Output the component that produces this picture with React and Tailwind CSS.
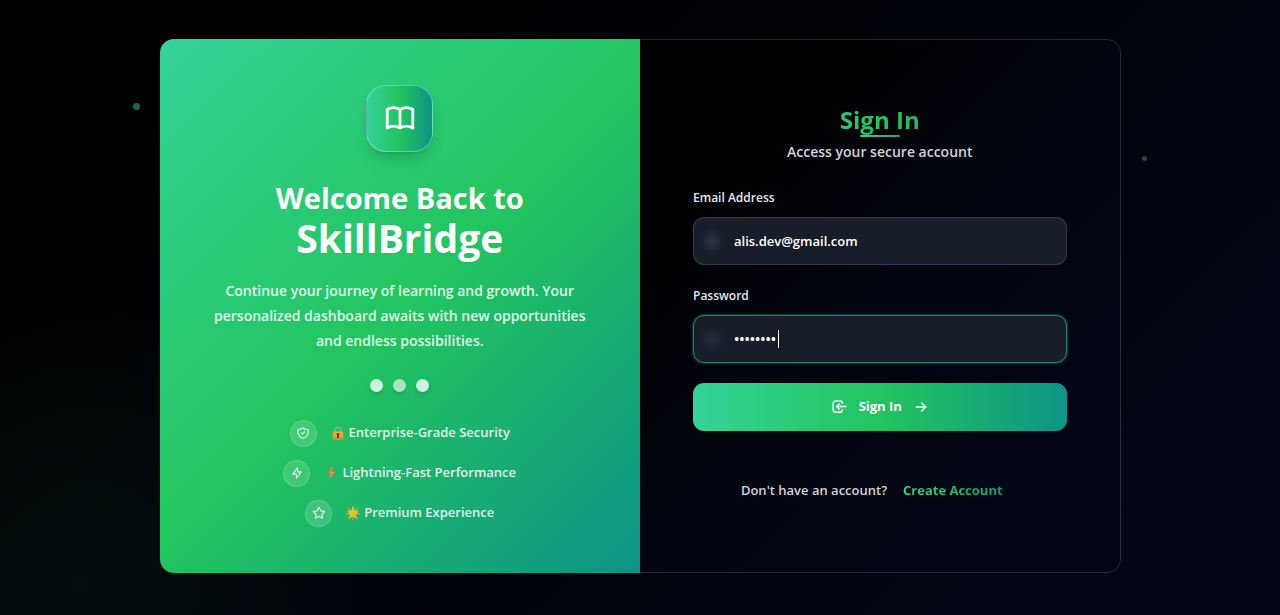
import { TbArrowRight, TbBolt, TbBook, TbStar } from "react-icons/tb";

function LineIcon({ className, strokeWidth = 2, children }) {
  return (
    <svg
      viewBox="0 0 24 24"
      className={className}
      fill="none"
      stroke="currentColor"
      strokeWidth={strokeWidth}
      strokeLinecap="round"
      strokeLinejoin="round"
      aria-hidden="true"
    >
      {children}
    </svg>
  );
}

function ShieldIcon({ className }) {
  return (
    <LineIcon className={className}>
      <path d="M9 12l2 2l4 -4" />
      <path d="M12 3a12 12 0 0 0 8.5 3a12 12 0 0 1 -8.5 15a12 12 0 0 1 -8.5 -15a12 12 0 0 0 8.5 -3" />
    </LineIcon>
  );
}

function LoginIcon({ className }) {
  return (
    <LineIcon className={className}>
      <path d="M16 7.5V7a3 3 0 0 0-3-3H7a4 4 0 0 0-4 4v8a4 4 0 0 0 4 4h6a3 3 0 0 0 3-3v-.5" />
      <path d="M21 12H8l3.5-3.5" />
      <path d="M11.500 15.500L8 12" />
    </LineIcon>
  );
}

function LockGlyph() {
  return (
    <svg viewBox="0 0 16 16" className="h-[14px] w-[14px]" aria-hidden="true">
      <path d="M4.900 7.500V4.400a3.100 3.100 0 0 1 6.200 0v3.100" fill="none" stroke="#9ca8a4" strokeWidth="1.5" />
      <rect x="2" y="6.2" width="12" height="9.3" rx="1.2" fill="#eba936" />
      <path d="M2 12.4h12v1.900a1.200 1.200 0 0 1-1.200 1.200H3.200A1.200 1.200 0 0 1 2 14.300z" fill="#e08a40" />
      <circle cx="8" cy="9.6" r="1.5" fill="#5b3b52" />
      <path d="M7.200 10h1.600l.3 3.600H6.900z" fill="#5b3b52" />
    </svg>
  );
}

function BoltGlyph() {
  return (
    <svg viewBox="0 0 16 16" className="h-[14px] w-[14px]" aria-hidden="true">
      <path d="M8.600.8 3.800 8.400h3l-1.400 6.800 6.600-8.400H8.800l1-6z" fill="#e8703a" />
      <path d="M8.600.8 6.400 8.400h1.800l-2.800 6.800 6.600-8.400H8.800l1-6z" fill="#e8904a" />
    </svg>
  );
}

function GlowStarGlyph() {
  return (
    <svg viewBox="0 0 16 16" className="h-[14px] w-[14px]" aria-hidden="true">
      <path
        d="M8 .8v3M2.400 2.800l2 2M13.600 2.800l-2 2M1 8.800h3M15 8.800h-3M3.400 14.400l1.600-2M12.600 14.400l-1.600-2M8 15.400v-3"
        stroke="#cfa632"
        strokeWidth="1.6"
        strokeLinecap="round"
      />
      <path
        d="M8 1.800l1.900 3.700 4.100.7-2.900 3 .6 4.200L8 11.600l-3.700 1.800.6-4.200-2.900-3 4.100-.7z"
        fill="#dcc52e"
        stroke="#dcc52e"
        strokeLinejoin="round"
      />
    </svg>
  );
}

const features = [
  { Icon: ShieldIcon, Glyph: LockGlyph, text: "Enterprise-Grade Security" },
  { Icon: TbBolt, Glyph: BoltGlyph, text: "Lightning-Fast Performance" },
  { Icon: TbStar, Glyph: GlowStarGlyph, text: "Premium Experience" },
];

function WelcomePanel() {
  return (
    <section className="flex flex-col items-center justify-center bg-linear-[135deg,#34d399_0%,#22c55e_50%,#0d9488_100%] px-12 py-[46px] text-center text-white">
      <div className="flex h-[67px] w-[67px] items-center justify-center rounded-[20px] border border-white/30 bg-linear-[90deg,#34d399,#22c55e_50%,#0d9488] shadow-lg shadow-black/15">
        <TbBook className="h-[34px] w-[34px]" />
      </div>
      <h1 className="mt-[26px] font-bold">
        <span className="block text-[29px] leading-10">Welcome Back to</span>
        <span className="block text-[39px] leading-10">SkillBridge</span>
      </h1>
      <p className="mt-5 max-w-[384px] text-sm leading-[25px] font-semibold text-white/85">
        Continue your journey of learning and growth. Your personalized dashboard awaits with new
        opportunities and endless possibilities.
      </p>
      <div className="mt-[26px] flex gap-[10px]">
        <span className="h-[13px] w-[13px] rounded-full bg-white/80 shadow-md" />
        <span className="h-[13px] w-[13px] rounded-full bg-white/60 shadow-md" />
        <span className="h-[13px] w-[13px] rounded-full bg-white/80 shadow-md" />
      </div>
      <ul className="mt-7 flex flex-col items-center gap-[13px]">
        {features.map(({ Icon, Glyph, text }) => (
          <li key={text} className="flex items-center gap-[14px] text-[13px] font-semibold text-white/85">
            <span className="flex h-[27px] w-[27px] items-center justify-center rounded-full border border-white/15 bg-white/15">
              <Icon className="h-[14px] w-[14px]" />
            </span>
            <span className="flex items-center gap-1">
              <Glyph />
              {text}
            </span>
          </li>
        ))}
      </ul>
    </section>
  );
}

function SignInPanel() {
  return (
    <section className="flex flex-col justify-center rounded-r-[14px] border border-l-0 border-white/15 px-[53px] pt-8 pb-10">
      <header className="flex flex-col items-center">
        <h2 className="relative bg-linear-[135deg,#2bc97a,#22c55e_50%,#1fb866] bg-clip-text text-2xl leading-8 font-bold text-transparent">
          Sign In
          <span className="absolute -bottom-px left-1/2 h-[2px] w-10 -translate-x-1/2 rounded-full bg-linear-[90deg,#34d399,#2c9c84]" />
        </h2>
        <p className="mt-1 text-sm leading-6 font-semibold text-gray-300">Access your secure account</p>
      </header>
      <form className="mt-6 flex flex-col" onSubmit={(e) => e.preventDefault()}>
        <label htmlFor="email" className="text-xs leading-5 font-semibold text-gray-200">
          Email Address
        </label>
        <div className="relative mt-[9px]">
          <input
            id="email"
            type="email"
            defaultValue="alis.dev@gmail.com"
            className="h-12 w-full rounded-[11px] border border-gray-700/80 bg-[#171e2a] pr-4 pl-10 text-[13px] font-semibold text-white outline-none"
          />
          <span className="pointer-events-none absolute top-1/2 left-[11px] h-4 w-4 -translate-y-1/2 rounded-full bg-[#273341] blur-[3px]" />
        </div>
        <label htmlFor="password" className="mt-[21px] text-xs leading-5 font-semibold text-gray-200">
          Password
        </label>
        <div className="relative mt-[9px]">
          <input
            id="password"
            type="password"
            defaultValue="password"
            className="h-12 w-full rounded-[11px] border border-[#2c7f68] bg-[#171e2a] pr-4 pl-10 text-sm font-semibold text-white caret-transparent shadow-[0_0_0_1px_#10b98133,0_0_4px_#10b98140] outline-none"
          />
          <span className="pointer-events-none absolute top-1/2 left-[11px] h-4 w-4 -translate-y-1/2 rounded-full bg-[#242b38] blur-[3px]" />
          <span className="pointer-events-none absolute top-[15px] left-[85px] h-[18px] w-px bg-white" />
        </div>
        <button
          type="submit"
          className="mt-5 flex h-12 items-center justify-center gap-[11px] rounded-[11px] bg-linear-[90deg,#34d399,#22c55e_50%,#0d9488] text-[13px] font-bold text-white"
        >
          <LoginIcon className="h-[17px] w-[17px]" />
          Sign In
          <TbArrowRight className="h-4 w-4" />
        </button>
      </form>
      <p className="mt-[49px] flex items-center justify-center gap-4 pr-4 text-[13px] leading-5 font-semibold text-gray-300">
        Don't have an account?
        <a
          href="#create"
          className="bg-linear-[90deg,#34d399,#22c55e_50%,#0d9488] bg-clip-text font-bold text-transparent"
        >
          Create Account
        </a>
      </p>
    </section>
  );
}

export default function App() {
  return (
    <main className="relative flex min-h-screen items-center justify-center overflow-hidden bg-linear-[135deg,#000000_0%,#000000_15%,#020617_100%] px-4 pt-6 pb-7 font-['Open_Sans',sans-serif]">
      <div className="pointer-events-none absolute bottom-0 left-0 h-80 w-96 bg-[radial-gradient(circle_at_20%_90%,#34d39910,transparent_70%)]" />
      <span className="absolute top-[103px] left-[133px] h-[7px] w-[7px] rounded-full bg-[#1c684f]" />
      <span className="absolute top-[156px] right-[133px] h-[5px] w-[5px] rounded-full bg-[#12502f]" />
      <div className="relative grid w-full max-w-[961px] grid-cols-2 overflow-hidden rounded-[14px] bg-linear-[135deg,#000000_45%,#02040f_65%,#020617]">
        <WelcomePanel />
        <SignInPanel />
      </div>
    </main>
  );
}
